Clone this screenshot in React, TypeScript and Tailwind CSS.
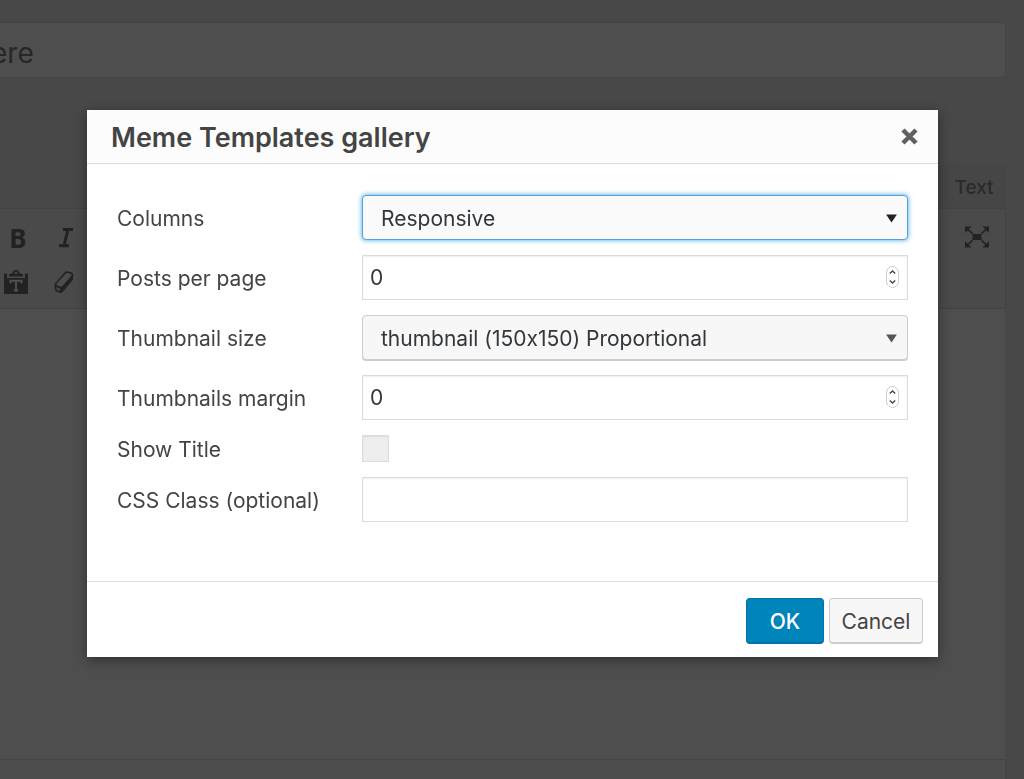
import React, { useState } from "react";

const control =
  "block w-full h-[45px] border border-[#dcdcdc] bg-white pl-[7px] text-[21px] leading-7 text-[#32373c] shadow-[inset_0_1px_2px_rgba(0,0,0,0.07)] outline-none [appearance:textfield] [&::-webkit-inner-spin-button]:appearance-none";

function Arrow() {
  return (
    <svg className="pointer-events-none absolute right-[11px] top-[19px] h-[9px] w-[11px]" viewBox="0 0 12 10" aria-hidden="true">
      <path d="M0 .5h12L6 9.5z" fill="currentColor" />
    </svg>
  );
}

function SelectBox({ id, options, focused }: { id: string; options: string[]; focused?: boolean }) {
  return (
    <div className={focused ? "relative text-[#222]" : "relative text-[#555]"}>
      <select
        id={id}
        className={
          focused
            ? "block h-[45px] w-full appearance-none rounded border border-[#5b9dd9] bg-[#fafafa] pl-[18px] pr-8 pt-0.5 text-[21px] text-[#32373c] shadow-[0_0_4px_1px_#30a8e0b0] outline-none"
            : "block h-[45px] w-full appearance-none rounded border border-[#ccc] bg-[#f7f7f7] pl-[18px] pr-8 pt-0.5 text-[21px] text-[#32373c] shadow-[0_1px_0_#ccc] outline-none"
        }
      >
        {options.map((o) => (
          <option key={o}>{o}</option>
        ))}
      </select>
      <Arrow />
    </div>
  );
}

function NumberBox({ id }: { id: string }) {
  const [value, setValue] = useState(0);
  return (
    <div className="relative">
      <input id={id} type="number" value={value} onChange={(e) => setValue(Number(e.target.value))} className={control} />
      <div className="absolute right-[9px] top-[11px] flex h-[22px] w-[13px] flex-col rounded-full border border-[#ccc] bg-white text-[#444]">
        <button type="button" aria-label="Increase" onClick={() => setValue(value + 1)} className="flex flex-1 items-center justify-center">
          <svg className="h-1 w-[7px]" viewBox="0 0 7 4" aria-hidden="true">
            <path d="M.8 3.4 3.5 1l2.7 2.4" fill="none" stroke="currentColor" strokeWidth="1.4" />
          </svg>
        </button>
        <button type="button" aria-label="Decrease" onClick={() => setValue(value - 1)} className="flex flex-1 items-center justify-center">
          <svg className="h-1 w-[7px]" viewBox="0 0 7 4" aria-hidden="true">
            <path d="M.8.6 3.5 3 6.2.6" fill="none" stroke="currentColor" strokeWidth="1.4" />
          </svg>
        </button>
      </div>
    </div>
  );
}

function Editor() {
  return (
    <main className="flex min-h-screen flex-col overflow-hidden pr-[18px] pt-[22px]">
      <input
        aria-label="Title"
        defaultValue="ere"
        className="-ml-2.5 h-14 w-[calc(100%+10px)] rounded border border-[#434343] bg-[#4e4e4e] pt-1.5 text-[28px] text-[#262626] outline-none"
      />
      <div className="mt-[87px] flex h-[43px] justify-end">
        <button type="button" className="w-[72px] border border-[#444] bg-[#464646] pl-2 pt-1 text-[19px] font-medium text-[#2a2a2a]">
          Text
        </button>
      </div>
      <div className="flex h-[101px] justify-between border-y border-r border-[#424242] bg-[#4a4a4a] pr-4 pt-[13px] text-[#222]">
        <div className="grid h-[76px] grid-cols-[32px_32px] gap-x-4">
          <button
            type="button"
            aria-label="Bold"
            className="flex h-8 items-center justify-center pl-1 font-['Noto_Sans',sans-serif] text-[26px] font-bold leading-8"
          >
            B
          </button>
          <button type="button" aria-label="Italic" className="flex h-8 items-center justify-center pl-1">
            <svg className="h-5 w-4" viewBox="0 0 16 20" aria-hidden="true">
              <path d="M5 1.500h10M1 17.700h10M10 1.500 6 17.700" fill="none" stroke="currentColor" strokeWidth="3" />
            </svg>
          </button>
          <button type="button" aria-label="Paste as text" className="mt-3 flex h-8 items-center justify-center">
            <svg className="h-6 w-6" viewBox="0 0 24 24" aria-hidden="true">
              <path d="M0 3.500h3V8h18V3.500h3V24H0z" fill="currentColor" />
              <path d="M5 6.500V4.200L8.600 3C9 1 10.200 0 12 0s3 1 3.400 3L19 4.200v2.300z" fill="currentColor" />
              <circle cx="12" cy="3" r="1.300" fill="#4a4a4a" />
              <path d="M6.500 13.200v-2.500h11v2.500M12 10.700v10M9.800 20.500h4.400" fill="none" stroke="#505050" strokeWidth="2" />
            </svg>
          </button>
          <button type="button" aria-label="Clear formatting" className="mt-3 flex h-8 items-center justify-center">
            <svg className="h-6 w-6" viewBox="0 0 24 24" aria-hidden="true">
              <path d="M2.500 14 12.600 2.300Q13.800 1 15.300 1.300l4 1q2.200.7 2 2.900l-.4 4.600L10.800 22q-1.300 1.400-3 1l-2.800-.9q-1.900-.7-2.200-2.800z" fill="currentColor" />
              <path d="M4.500 13.800 13.700 3.500q.9-.8 2-.5l3 .9q1.200.4.9 1.600L10.500 16q-.8.800-1.800.5l-3.600-1.100q-1.200-.5-.6-1.600z" fill="#4c4c4c" />
              <path d="m4.300 17 3.900 1.300-.7 3-2.100-.7q-1-.4-1-1.600z" fill="#444" />
            </svg>
          </button>
        </div>
        <button type="button" aria-label="Distraction-free writing mode" className="flex h-[30px] w-6 items-center justify-center">
          <svg className="h-6 w-6" viewBox="0 0 24 24" aria-hidden="true">
            <path d="M7.500 9h9v6h-9zM0 1.500h6.500L0 8zm24 0V8l-6.500-6.500zM0 22.500V16l6.500 6.500zm24 0h-6.500L24 16z" fill="currentColor" />
            <path d="m2.500 4 5 4.700M21.500 4l-5 4.700M2.500 20l5-4.700M21.500 20l-5-4.700" stroke="currentColor" strokeWidth="1.700" />
          </svg>
        </button>
      </div>
      <div className="flex-1 border-r border-[#484848] bg-[#4e4e4e]" />
      <div className="h-5 border-r border-t border-[#444] bg-[#4d4d4d]" />
    </main>
  );
}

export default function App() {
  const label = "pt-[3px] text-[21px] leading-7 text-[#444]";
  return (
    <div className="bg-[#484848] font-['Inter',sans-serif] [font-feature-settings:'calt'_0]">
      <Editor />
      <div className="fixed inset-0 pl-[87px] pr-[86px] pt-[110px]">
        <form
          role="dialog"
          aria-labelledby="dialog-title"
          onSubmit={(e) => e.preventDefault()}
          className="bg-white shadow-[0_3px_12px_rgba(0,0,0,0.4)]"
        >
          <header className="flex h-[54px] items-center justify-between border-b border-[#ddd] bg-[#fcfcfc] pl-6 pr-5">
            <h1 id="dialog-title" className="pt-0.5 text-[27px] font-semibold leading-9 text-[#444]">
              Meme Templates gallery
            </h1>
            <button type="button" aria-label="Close" className="text-[#606060]">
              <svg className="h-[17px] w-[17px]" viewBox="0 0 17 17" aria-hidden="true">
                <path d="m2 2 13 13M15 2 2 15" stroke="currentColor" strokeWidth="4.500" />
              </svg>
            </button>
          </header>
          <div className="grid grid-cols-[245px_1fr] items-center gap-y-[15px] px-[30px] pb-[59px] pt-[31px]">
            <label htmlFor="columns" className={label}>Columns</label>
            <SelectBox id="columns" options={["Responsive"]} focused />
            <label htmlFor="posts" className={label}>Posts per page</label>
            <NumberBox id="posts" />
            <label htmlFor="size" className={label}>Thumbnail size</label>
            <SelectBox id="size" options={["thumbnail (150x150) Proportional"]} />
            <label htmlFor="margin" className={label}>Thumbnails margin</label>
            <NumberBox id="margin" />
            <label htmlFor="show-title" className="-my-1 pt-[3px] text-[21px] leading-7 text-[#444]">Show Title</label>
            <input
              id="show-title"
              type="checkbox"
              className="block h-[27px] w-[27px] appearance-none border border-[#ddd] bg-[#eee] shadow-[inset_0_1px_2px_rgba(0,0,0,0.07)] checked:bg-[#0085ba]"
            />
            <label htmlFor="css-class" className={label}>CSS Class (optional)</label>
            <input id="css-class" type="text" className={control} />
          </div>
          <footer className="flex h-[76px] justify-end gap-[5px] border-t border-[#ddd] pr-[15px] pt-4">
            <button type="submit" className="h-[46px] w-[78px] rounded border border-b-2 border-[#0073aa] bg-[#0085ba] pt-0.5 text-[21px] font-medium text-white">
              OK
            </button>
            <button type="button" className="h-[46px] w-[94px] rounded border border-b-2 border-[#ccc] bg-[#f7f7f7] pt-0.5 text-[21px] text-[#444]">
              Cancel
            </button>
          </footer>
        </form>
      </div>
    </div>
  );
}
